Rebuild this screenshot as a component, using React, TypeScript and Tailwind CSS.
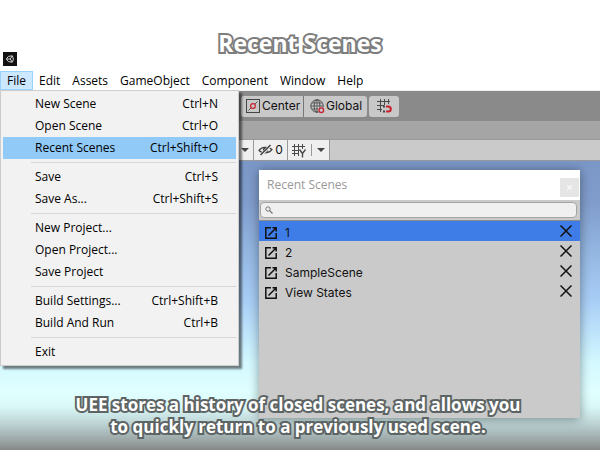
import { useState } from "react";

const uiFont = "font-['Open_Sans','Noto_Sans',sans-serif]";
const interFont = "font-['Inter',sans-serif]";

const menus = ["File", "Edit", "Assets", "GameObject", "Component", "Window", "Help"];

const groups: [string, string][][] = [
  [
    ["New Scene", "Ctrl+N"],
    ["Open Scene", "Ctrl+O"],
    ["Recent Scenes", "Ctrl+Shift+O"],
  ],
  [
    ["Save", "Ctrl+S"],
    ["Save As...", "Ctrl+Shift+S"],
  ],
  [
    ["New Project...", ""],
    ["Open Project...", ""],
    ["Save Project", ""],
  ],
  [
    ["Build Settings...", "Ctrl+Shift+B"],
    ["Build And Run", "Ctrl+B"],
  ],
  [["Exit", ""]],
];

const scenes = ["1", "2", "SampleScene", "View States"];

function UnityLogo() {
  return (
    <svg viewBox="0 0 14 14" className="size-3.5 bg-[#111]" fill="none" stroke="#ccc" aria-hidden="true">
      <path d="M3.3 7 5.4 4.4 9.4 3.8 10.4 7 9.4 10.2 5.4 9.6Z" />
      <path d="M3.6 7H7.3M7.3 7 9.2 4M7.3 7 9.2 10" />
    </svg>
  );
}

function PivotIcon() {
  return (
    <svg viewBox="0 0 14 14" className="size-3.5" fill="none" aria-hidden="true">
      <rect x="0.5" y="0.5" width="13" height="13" stroke="#444" />
      <path d="M2.5 11.5 5 9M9 5l2.5-2.5" stroke="#555" />
      <circle cx="7" cy="7" r="2.4" stroke="#c8202c" strokeWidth="1.2" />
    </svg>
  );
}

function GlobeIcon() {
  return (
    <svg viewBox="0 0 15 15" className="size-[15px]" fill="none" stroke="#4a4a4a" aria-hidden="true">
      <circle cx="7" cy="7" r="6.2" />
      <ellipse cx="7" cy="7" rx="2.9" ry="6.2" />
      <path d="M7 1v12M1 7h12M2 4h10M2 10h7" strokeWidth="0.8" />
      <circle cx="11.3" cy="11.2" r="3.3" fill="#c8c8c8" stroke="none" />
      <circle cx="11.3" cy="11.2" r="2.3" stroke="#c8202c" strokeWidth="1.3" />
    </svg>
  );
}

function SnapIcon() {
  return (
    <svg viewBox="0 0 15 15" className="size-[15px]" fill="none" aria-hidden="true">
      <path d="M3.5 0v13M7.5 0v6M11.5 0v5M0 2.5h13M0 6.5h7M0 10.5h5" stroke="#4a4a4a" />
      <path d="M9 7.500h2.300a2.500 2.500 0 0 1 0 5H9" stroke="#c8202c" strokeWidth="2" />
      <path d="M6 7.500h2M6 12.500h2" stroke="#444" strokeWidth="2" />
    </svg>
  );
}

function HiddenIcon() {
  return (
    <svg viewBox="0 0 15 12" className="h-3 w-[15px]" fill="none" stroke="#3f3f3f" aria-hidden="true">
      <path d="M1 6.500C3.500 2.800 10 2.300 14 5.500 11 9.800 4.500 10 1 6.500Z" strokeWidth="1.300" />
      <circle cx="7.500" cy="6" r="2.200" fill="#3f3f3f" />
      <path d="M2.500 11.500 13 1" stroke="#efefef" strokeWidth="3" />
      <path d="M2.500 11 12.500 1" strokeWidth="1.400" />
    </svg>
  );
}

function GridYIcon() {
  return (
    <svg viewBox="0 0 14 15" className="h-[15px] w-3.5" fill="none" stroke="#4a4a4a" aria-hidden="true">
      <path d="M2.500 1v12M6.500 1v12M10.500 1v5M0 3.500h13M0 7.500h6M0 10.500h6" />
      <path d="M7.500 6.500 10.500 10.500 13.500 6.500M10.500 10v4.500" strokeWidth="1.400" />
    </svg>
  );
}

function Caret() {
  return (
    <svg viewBox="0 0 8 4" className="h-1 w-2" fill="#444" aria-hidden="true">
      <path d="M0 0h8L4 4Z" />
    </svg>
  );
}

function OpenIcon() {
  return (
    <svg viewBox="0 0 12 12" className="size-3" fill="none" stroke="#111" strokeWidth="1.500" aria-hidden="true">
      <path d="M6 .8H.8v10.400h10.400V6" />
      <path d="M3.500 8.500 11 1M7.500.8h3.700v3.700" />
    </svg>
  );
}

function CrossIcon() {
  return (
    <svg viewBox="0 0 12 12" className="size-3" fill="none" stroke="#111" strokeWidth="1.500" aria-hidden="true">
      <path d="m.5.500 11 11M11.500.500l-11 11" />
    </svg>
  );
}

function FileMenu() {
  return (
    <div
      role="menu"
      aria-label="File"
      className="absolute top-full left-0 z-20 w-[239px] border border-[#ccc] bg-[#f2f2f2] p-0.5 shadow-[3px_3px_2px_rgba(0,0,0,0.5)]"
    >
      {groups.map((group, g) => (
        <div key={g}>
          {g > 0 && (
            <div className="flex h-[7px] items-center pl-7">
              <hr className="w-full border-[#d7d7d7]" />
            </div>
          )}
          {group.map(([name, keys]) => (
            <button
              key={name}
              role="menuitem"
              className={`flex h-[22px] w-full items-center justify-between pr-[18px] pl-8 whitespace-nowrap ${
                name === "Recent Scenes" ? "bg-[#91c9f7]" : ""
              }`}
            >
              <span>{name}</span>
              <span>{keys}</span>
            </button>
          ))}
        </div>
      ))}
    </div>
  );
}

function RecentScenes() {
  const [query, setQuery] = useState("");
  return (
    <section
      aria-label="Recent Scenes"
      className="absolute top-[9px] right-5 bottom-8 left-[259px] flex flex-col bg-[#cacaca] shadow-[0_1px_10px_rgba(0,0,0,0.4)]"
    >
      <header className="flex h-[30px] items-center justify-between bg-white pr-px pl-2">
        <h2 className={`text-xs text-[#999] ${uiFont}`}>Recent Scenes</h2>
        <button aria-label="Close" className="mt-1 flex size-[19px] items-center justify-center bg-[#e5e5e5]">
          <svg viewBox="0 0 5 5" className="size-[5px]" stroke="#f8f8f8" strokeWidth="1.300" aria-hidden="true">
            <path d="m.3.300 4.400 4.400M4.700.300.300 4.700" />
          </svg>
        </button>
      </header>
      <div className="flex h-[21px] border-b border-[#8a8a8a] px-px pt-0.5 pb-0.5">
        <label className="mr-0.5 flex flex-1 items-center rounded-[4px] border border-[#a4a4a4] bg-[#f0f0f0] pl-1">
          <svg viewBox="0 0 8 8" className="size-2" fill="none" stroke="#777" aria-hidden="true">
            <circle cx="3" cy="3" r="2.200" />
            <path d="m4.600 4.600 2.900 2.900" strokeWidth="1.300" />
          </svg>
          <input
            aria-label="Search scenes"
            value={query}
            onChange={(e) => setQuery(e.target.value)}
            className="h-3 min-w-0 flex-1 pl-1 text-[10px] outline-none"
          />
        </label>
      </div>
      <ul className={`text-xs text-[#111] ${interFont}`}>
        {scenes.map((scene, i) => (
          <li key={scene} className={`flex h-5 justify-between pr-2 pl-1.5 ${i === 0 ? "bg-[#3e7de7]" : ""}`}>
            <button className="flex items-center gap-2 pt-1">
              <OpenIcon />
              <span className="leading-4">{scene}</span>
            </button>
            <button aria-label={`Remove ${scene}`}>
              <CrossIcon />
            </button>
          </li>
        ))}
      </ul>
    </section>
  );
}

const outline = "font-bold text-white [paint-order:stroke_fill]";

export default function App() {
  return (
    <main className={`relative flex h-screen flex-col overflow-hidden bg-white text-xs text-black ${uiFont}`}>
      <header className="flex h-[71px] flex-col justify-between pb-[5px]">
        <h1 className={`pt-7 text-center text-[23px] leading-[30px] [-webkit-text-stroke:4px_#7d7d7d] ${outline}`}>
          Recent Scenes
        </h1>
        <div className="-mt-1.5 pl-[3px]">
          <UnityLogo />
        </div>
      </header>
      <nav className="relative flex h-[19px] shrink-0">
        {menus.map((m) => (
          <button
            key={m}
            className={`border ${m === "File" ? "border-[#99d1ff] bg-[#cce8ff] px-1.5" : "border-transparent px-[5px]"}`}
          >
            {m}
          </button>
        ))}
        <FileMenu />
      </nav>
      <div className={`flex h-[31px] shrink-0 items-center border-t border-[#f0f0f0] bg-[#8a8a8a] pl-[241px] text-xs text-[#111] ${interFont}`}>
        <button className="flex h-[21px] w-[63px] items-center gap-0.5 rounded-l-[3px] border-r border-[#777] bg-[#c8c8c8] pl-[5px]">
          <PivotIcon />
          Center
        </button>
        <button className="flex h-[21px] w-[63px] items-center gap-px rounded-r-[3px] bg-[#c8c8c8] pl-1.5">
          <GlobeIcon />
          Global
        </button>
        <button aria-label="Snap" className="ml-0.5 flex h-[21px] w-[30px] items-center justify-center rounded-[3px] bg-[#c8c8c8]">
          <SnapIcon />
        </button>
      </div>
      <div className="h-[18px] shrink-0 bg-[#a5a5a5]" />
      <div className={`flex h-[22px] shrink-0 border-y border-[#999] bg-[#cacaca] pl-[237px] text-xs text-[#111] ${interFont}`}>
        <button aria-label="Effects" className="flex w-[17px] items-center justify-center border-r border-[#999] bg-[#efefef]">
          <Caret />
        </button>
        <button className="flex w-[34px] items-center justify-center gap-0.5 border-r border-[#999] bg-[#efefef]">
          <HiddenIcon />0
        </button>
        <button aria-label="Grid" className="flex w-[42px] items-center justify-between border-r border-[#999] bg-[#efefef] px-1">
          <GridYIcon />
          <span className="h-3 w-px bg-[#999]" />
          <Caret />
        </button>
      </div>
      <div className="relative flex-1 bg-[linear-gradient(#7b97c6,#819dcc_15%,#94b7e2_32%,#a8cdf5_48%,#bfe5fb_60%,#d4f9ff_70%,#e0ffff_80%,#daf8f8_85%,#bcd2d3_91%,#9aa4a4_97%,#858787)]">
        <RecentScenes />
        <p className={`absolute inset-x-0 bottom-3 pr-1 text-center text-[17px] leading-[22px] [-webkit-text-stroke:4px_#5d6464] ${outline}`}>
          UEE stores a history of closed scenes, and allows you
          <br />
          to quickly return to a previously used scene.
        </p>
      </div>
    </main>
  );
}
